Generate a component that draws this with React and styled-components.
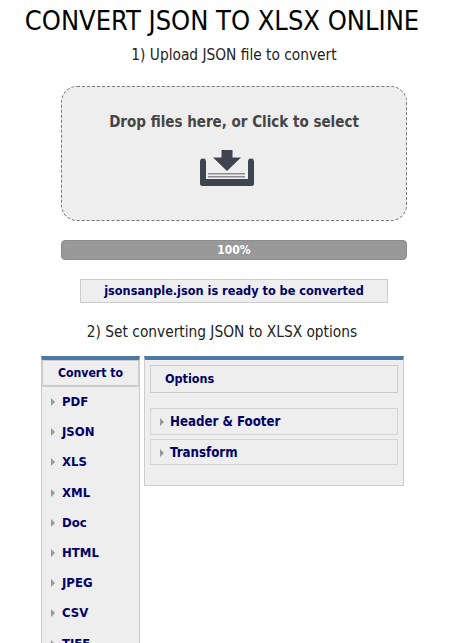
import React from "react";
import styled, { createGlobalStyle } from "styled-components";

const Global = createGlobalStyle`
  html, body { margin: 0; padding: 0; background: #fff; height: 643px; overflow: hidden; }
`;
const FONT = `"DejaVu Sans Condensed", "Open Sans", sans-serif`;
const Page = styled.div`
  width: 450px;
  height: 643px;
  overflow: hidden;
  font-family: ${FONT};
`;
const Title = styled.h1`
  margin: 0;
  padding-top: 5px;
  width: 444px;
  text-align: center;
  font: 400 27px/32px ${FONT};
  color: #000;
`;
const Step = styled.p`
  margin: ${(p) => p.$top}px 0 0;
  width: ${(p) => p.$width}px;
  text-align: center;
  font: 400 15.3px/20px ${FONT};
  color: #222;
`;
const Drop = styled.div`
  margin: 21px 0 0 61px;
  width: 344px;
  height: 133px;
  border: 1px dashed #777;
  border-radius: 16px;
  background: #eee;
  display: flex;
  flex-direction: column;
  align-items: center;
`;
const DropText = styled.div`
  margin-top: 25px;
  font: 700 15px/20px ${FONT};
  color: #454545;
`;
const DropIcon = styled.svg`
  margin: 18px 15px 0 0;
  width: 54px;
  height: 36px;
`;
const Progress = styled.div`
  margin: 19px 0 0 61px;
  width: 346px;
  height: 20px;
  box-sizing: border-box;
  border-radius: 4px;
  background: #999;
  border: 1px solid #8c8c8c;
  text-align: center;
  font: 700 12px/18px ${FONT};
  color: #fff;
`;
const Status = styled.div`
  margin: 19px 0 0 80px;
  width: 308px;
  height: 24px;
  box-sizing: border-box;
  background: #eee;
  border: 1px solid #ccc;
  text-align: center;
  font: 700 12.6px/22px ${FONT};
  color: #000066;
`;
const Workspace = styled.div`
  margin: 14px 0 0 41px;
  display: flex;
  gap: 4px;
  align-items: flex-start;
`;
const Panel = styled.div`
  box-sizing: border-box;
  width: ${(p) => p.$width}px;
  background: #eee;
  border: 1px solid #ccc;
  border-top: 4px solid #4a7aa5;
`;
const SideHead = styled.div`
  height: 27px;
  box-sizing: border-box;
  border: 1px solid #ccc;
  border-width: 1px 1px 2px 1px;
  text-align: center;
  font: 700 12.2px/24px ${FONT};
  color: #000066;
`;
const Nav = styled.ul`
  list-style: none;
  margin: 0;
  padding: 0 0 0 9px;
`;
const NavItem = styled.li`
  height: 30.2px;
  display: flex;
  align-items: center;
  gap: 7px;
  font: 700 13px/20px ${FONT};
  color: #000066;
`;
const Arrow = styled.svg`
  width: 4px;
  height: 8px;
  flex: none;
`;
const OptionsBody = styled.div`
  padding: 5px 5px 0;
  height: 125px;
  box-sizing: border-box;
`;
const OptionsHead = styled.div`
  height: 28px;
  box-sizing: border-box;
  border: 1px solid #ccc;
  padding-left: 14px;
  font: 700 12.5px/26px ${FONT};
  color: #000066;
`;
const Accordion = styled.div`
  height: ${(p) => p.$height}px;
  margin-top: ${(p) => p.$top}px;
  box-sizing: border-box;
  border: 1px solid #d4d4d4;
  padding: 1px 0 0 9px;
  display: flex;
  align-items: center;
  gap: 6px;
  font: 700 13.2px/20px ${FONT};
  color: #000066;
`;

const Tri = () => (
  <Arrow viewBox="0 0 4 8">
    <path d="M0 0l4 4-4 4z" fill="#999" />
  </Arrow>
);

const formats = ["PDF", "JSON", "XLS", "XML", "Doc", "HTML", "JPEG", "CSV", "TIFF"];

export default function App() {
  return (
    <Page>
      <Global />
      <Title>CONVERT JSON TO XLSX ONLINE</Title>
      <Step $top={8} $width={468}>1) Upload JSON file to convert</Step>
      <Drop>
        <DropText>Drop files here, or Click to select</DropText>
        <DropIcon viewBox="0 0 54 36">
          <path d="M0 11.5a3 3 0 0 1 6 0V29h42V11.5a3 3 0 0 1 6 0V33.5a2.5 2.5 0 0 1-2.5 2.5H2.5A2.5 2.5 0 0 1 0 33.5z" fill="#3f4550" />
          <path d="M21.5 0h11v7.5H41L27 21 13 7.5h8.5z" fill="#3f4550" />
          <path d="M8 23h37v1.5H8zM8 26h37v1.5H8z" fill="#8a8d94" />
        </DropIcon>
      </Drop>
      <Progress>100%</Progress>
      <Status>jsonsanple.json is ready to be converted</Status>
      <Step $top={19} $width={444}>2) Set converting JSON to XLSX options</Step>
      <Workspace>
        <Panel $width={99}>
          <SideHead>Convert to</SideHead>
          <Nav>
            {formats.map((f) => (
              <NavItem key={f}><Tri />{f}</NavItem>
            ))}
          </Nav>
        </Panel>
        <Panel $width={260}>
          <OptionsBody>
            <OptionsHead>Options</OptionsHead>
            <Accordion $height={27} $top={15}><Tri />Header &amp; Footer</Accordion>
            <Accordion $height={26} $top={4}><Tri />Transform</Accordion>
          </OptionsBody>
        </Panel>
      </Workspace>
    </Page>
  );
}
